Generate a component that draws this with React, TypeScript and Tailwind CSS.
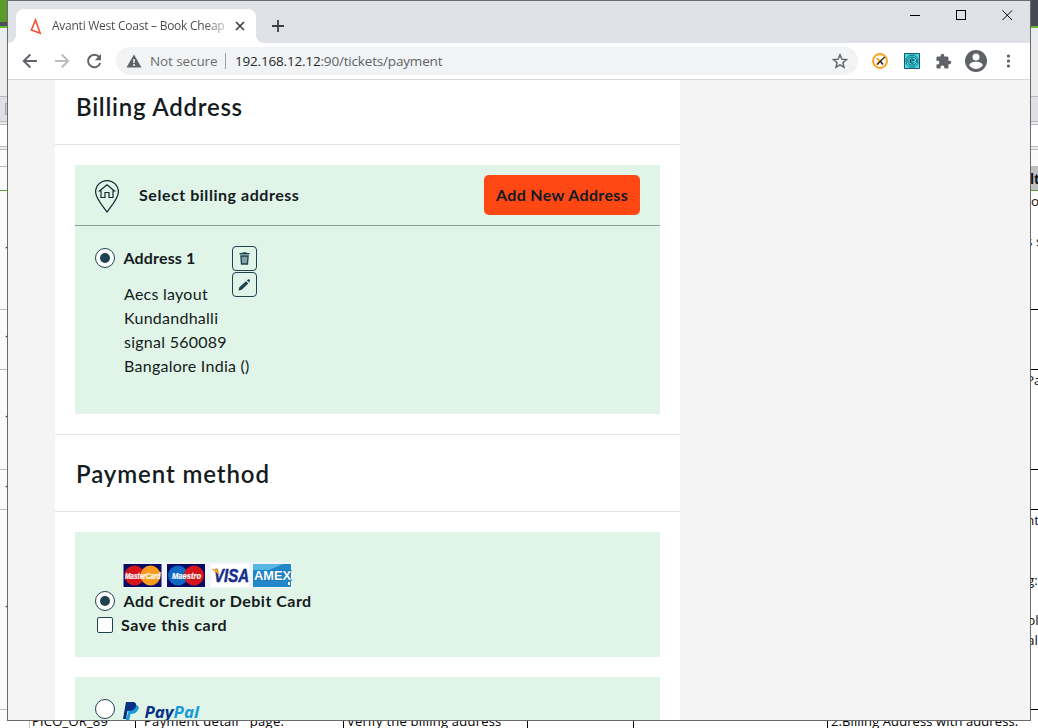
import React from "react";

type Seg = { h: number; cls: string; text?: string; textCls?: string; box?: boolean };

const leftSegments: Seg[] = [
  { h: 22, cls: "bg-[#5a9a2b]" },
  { h: 4, cls: "bg-[#4b4d5a]" },
  { h: 2, cls: "bg-[#68b82e]" },
  { h: 69, cls: "bg-[#ebecee] border-b border-[#b9bac0]" },
  { h: 25, cls: "bg-[#dfe0e6] border-b border-[#b4b5ba] pl-[5px] pt-[6px]", box: true },
  { h: 3, cls: "bg-[#ebecee] border-b border-[#b9bac0]" },
  { h: 22, cls: "bg-white border-b border-[#b9bac0]" },
  { h: 3, cls: "bg-[#ebecee] border-b border-[#b9bac0]" },
  { h: 17, cls: "bg-[#fafafa] border-b border-[#c0c0c0]" },
  { h: 24, cls: "bg-[#fafafa] border-b border-[#57a02c]" },
  { h: 119, cls: "bg-[#fafafa] border-b border-[#c0c0c0]", text: "1", textCls: "pl-[4px] pt-[50px]" },
  { h: 60, cls: "bg-[#fafafa] border-b border-[#c0c0c0]", text: "1", textCls: "pl-[4px] pt-[20px]" },
  { h: 100, cls: "bg-[#fafafa] border-b border-[#c0c0c0]", text: "1", textCls: "pl-[4px] pt-[40px]" },
  { h: 40, cls: "bg-[#fafafa] border-b border-[#c0c0c0]", text: "1", textCls: "pl-[4px] pt-[10px]" },
  { h: 200, cls: "bg-[#fafafa] border-b border-[#c0c0c0]", text: "1", textCls: "pl-[4px] pt-[90px]" },
  { h: 11, cls: "bg-[#fafafa]" },
];

const rightSegments: Seg[] = [
  { h: 26, cls: "bg-[#444954]" },
  { h: 2, cls: "bg-[#68b82e]" },
  { h: 69, cls: "bg-[#ebecee] border-b border-[#b9bac0]" },
  { h: 25, cls: "bg-[#dfe0e6] border-b border-[#b4b5ba]" },
  { h: 3, cls: "bg-[#ebecee] border-b border-[#b9bac0]" },
  { h: 22, cls: "bg-white border-b border-[#b9bac0]" },
  { h: 3, cls: "bg-[#ebecee] border-b border-[#b9bac0]" },
  { h: 16, cls: "bg-[#fafafa]" },
  { h: 25, cls: "bg-[#c0c0c0] border-b border-[#57a02c]", text: "lt", textCls: "-ml-[1px] pt-[4px] font-bold" },
  { h: 40, cls: "bg-white", text: "o", textCls: "pt-[1px]" },
  { h: 79, cls: "bg-white border-b border-black", text: "s s", textCls: "-ml-[5px] pt-[1px]" },
  { h: 60, cls: "bg-white border-b border-black" },
  { h: 100, cls: "bg-white border-b border-black", text: "Pa", textCls: "-ml-[5px] pt-[1px]" },
  { h: 40, cls: "bg-white border-b border-black" },
  { h: 61, cls: "bg-white", text: "nt", textCls: "-ml-[5px] pt-[1px]" },
  { h: 40, cls: "bg-white", text: "g:", textCls: "-ml-[4px]" },
  { h: 20, cls: "bg-white", text: "pl", textCls: "-ml-[4px]" },
  { h: 79, cls: "bg-white border-b border-black", text: "ale", textCls: "-ml-[4px]" },
  { h: 11, cls: "bg-white" },
];

function Strip({ segments }: { segments: Seg[] }) {
  return (
    <div className="flex w-[7px] shrink-0 flex-col overflow-hidden">
      {segments.map((s, i) => (
        <div key={i} className={`shrink-0 overflow-hidden ${s.cls}`} style={{ height: s.h }}>
          {s.box && <div className="h-[12px] w-[10px] border border-[#a9aab0] bg-[#c9cad0]" />}
          {s.text && (
            <div className={`whitespace-nowrap text-[13.5px] leading-[18px] text-[#111] ${s.textCls}`}>{s.text}</div>
          )}
        </div>
      ))}
    </div>
  );
}

function SheetRow() {
  const cells = [
    { w: 30, t: "", tc: "", b: "border-[#c0c0c0]" },
    { w: 106, t: "PICO_OR_89", tc: "tracking-[0.2px]", b: "border-black" },
    { w: 208, t: "Payment detail   page.", tc: "pl-[8px] tracking-[0.3px]", b: "border-black" },
    { w: 184, t: "Verify the billing address", tc: "pl-[3px] tracking-[0.22px]", b: "border-black" },
    { w: 106, t: "", tc: "", b: "border-black" },
    { w: 194, t: "", tc: "", b: "border-black" },
    { w: 210, t: "2.Billing Address with address.", tc: "pl-[3px] tracking-[0.1px]", b: "border-transparent" },
  ];
  return (
    <div className="flex h-[7px] shrink-0 bg-white">
      {cells.map((c, i) => (
        <div key={i} className={`h-[7px] shrink-0 overflow-hidden border-r ${c.b}`} style={{ width: c.w }}>
          <div className={`-mt-[9px] whitespace-pre pl-[2px] text-[13px] leading-[18px] text-black ${c.tc}`}>{c.t}</div>
        </div>
      ))}
    </div>
  );
}

function TabBar() {
  return (
    <div className="flex h-[42px] shrink-0 items-end bg-[#dee1e6]">
      <div className="h-2 w-2 bg-white">
        <div className="h-2 w-2 rounded-br-lg bg-[#dee1e6]" />
      </div>
      <div className="flex h-[34px] w-[240px] items-center rounded-t-lg bg-white">
        <svg className="ml-[14px] shrink-0" width="12" height="17" viewBox="0 0 12 17">
          <path d="M5.500 2 1.400 12l8.800 3.200L5.500 2Z" fill="none" stroke="#f5522d" strokeWidth="1.600" />
        </svg>
        <div className="ml-[10px] w-[173px] overflow-hidden whitespace-nowrap bg-gradient-to-r from-[#45484c] from-[88%] to-[#c5c6c8] bg-clip-text text-[12px] tracking-[-0.25px] text-transparent">
          Avanti West Coast – Book Cheap
        </div>
        <svg className="ml-[10px] shrink-0" width="10" height="10" viewBox="0 0 10 10">
          <path d="m1 1 8 8M9 1 1 9" stroke="#3c4043" strokeWidth="1.700" />
        </svg>
      </div>
      <div className="h-2 w-2 bg-white">
        <div className="h-2 w-2 rounded-bl-lg bg-[#dee1e6]" />
      </div>
      <svg className="mb-[11px] ml-2" width="12" height="12" viewBox="0 0 12 12">
        <path d="M6 0v12M0 6h12" stroke="#3c4043" strokeWidth="1.8" />
      </svg>
      <svg className="mb-[22px] ml-auto mr-[16px]" width="104" height="12" viewBox="0 0 104 12" shapeRendering="crispEdges">
        <path d="M0 6.500h10" stroke="#000" />
        <path d="M46.500 1.500h9v9h-9z" fill="none" stroke="#000" />
        <path d="m92.500 1.500 9.500 9.500M102 1.500 92.500 11" stroke="#000" shapeRendering="auto" />
      </svg>
    </div>
  );
}

function Toolbar() {
  return (
    <div className="flex h-[37px] shrink-0 items-center border-b border-[#d8d9dc] bg-white">
      <svg className="ml-[14px]" width="16" height="16" viewBox="0 0 16 16">
        <path d="M15 8H2M8.300 1.500 1.800 8l6.500 6.500" fill="none" stroke="#5f6368" strokeWidth="2" />
      </svg>
      <svg className="ml-4" width="16" height="16" viewBox="0 0 16 16">
        <path d="M1 8h13M7.700 1.500 14.200 8l-6.500 6.500" fill="none" stroke="#babcbe" strokeWidth="2" />
      </svg>
      <svg className="ml-4" width="16" height="16" viewBox="0 0 16 16">
        <path d="M13.200 4.200A6.200 6.200 0 1 0 14.200 10" fill="none" stroke="#5f6368" strokeWidth="2" />
        <path d="M15 1v6.200H8.800z" fill="#5f6368" />
      </svg>
      <div className="ml-[14px] flex h-7 w-[742px] items-center rounded-full bg-[#f1f3f4]">
        <svg className="ml-[10px]" width="16" height="14" viewBox="0 0 16 14">
          <path d="M8 .5 15.500 13.500H.5z" fill="#5f6368" />
          <path d="M8 5v4M8 10v2" stroke="#f1f3f4" strokeWidth="1.600" />
        </svg>
        <span className="ml-2 w-[67px] whitespace-nowrap text-[13.500px] tracking-[-0.1px] text-[#6b6f73]">Not secure</span>
        <div className="ml-2 h-4 w-px bg-[#9aa0a6]" />
        <span className="ml-[9px] whitespace-nowrap text-[13.500px] tracking-[-0.18px] text-[#27292c]">
          192.168.12.12<span className="text-[#5f6368]">:90/tickets/payment</span>
        </span>
        <svg className="ml-auto mr-[10px]" width="16" height="16" viewBox="0 0 16 16">
          <path d="m8 1.800 1.800 4.400 4.700.4-3.600 3.100 1.100 4.600L8 11.900l-4 2.400 1.100-4.600L1.500 6.600l4.700-.4z" fill="none" stroke="#5f6368" strokeWidth="1.400" />
        </svg>
      </div>
      <svg className="ml-[14px]" width="16" height="16" viewBox="0 0 16 16">
        <circle cx="8" cy="8" r="7" fill="#fff" stroke="#f9a31b" strokeWidth="1.900" />
        <path d="m3.300 4.500 3.200 1 1.500 1.500 3-1.500-2 3-3 3.500-2-.3 2.500-3.500z" fill="#f59c12" />
        <path d="M12.800 4 5 11.500" stroke="#222" strokeWidth="1.100" />
        <path d="m8.500 8.500 2.500 3" stroke="#222" strokeWidth="1.600" />
      </svg>
      <svg className="ml-4" width="16" height="16" viewBox="0 0 16 16">
        <path d="M.5.5h15v15H.5z" fill="#43dbe6" stroke="#1c5964" />
        <path d="m5.500 2.300 5-.1 3.400 3.300v5l-3.400 3.400h-5l-3.400-3.400v-5zM5.600 4.200h4.800l2 2.500v3L10 12H6l-2-2.500V6.500z" fill="none" stroke="#176473" strokeWidth="1" />
        <path d="M6 8.500 10 7.200c-.6-2-4-1.500-4 .8s2.600 2.500 4 1.300" fill="none" stroke="#174c5a" strokeWidth="1.100" />
      </svg>
      <svg className="ml-[15px]" width="17" height="17" viewBox="0 0 24 24">
        <path d="M20.500 11H19V7c0-1.100-.9-2-2-2h-4V3.500a2.500 2.500 0 0 0-5 0V5H4c-1.100 0-2 .9-2 2v3.800h1.500a2.700 2.700 0 0 1 0 5.400H2V20c0 1.100.9 2 2 2h3.800v-1.500a2.700 2.700 0 0 1 5.400 0V22H17c1.100 0 2-.9 2-2v-4h1.500a2.500 2.500 0 0 0 0-5z" fill="#5f6368" />
      </svg>
      <svg className="ml-[13px]" width="22" height="22" viewBox="0 0 22 22">
        <circle cx="11" cy="11" r="11" fill="#5f6368" />
        <circle cx="11" cy="7" r="3.500" fill="#fff" />
        <path d="M4.300 15.500c0-5 13.400-5 13.400 0-3.300 4.500-10 4.500-13.400 0z" fill="#fff" />
      </svg>
      <svg className="ml-[20px]" width="4" height="14" viewBox="0 0 4 14">
        <circle cx="1.500" cy="2" r="1.600" fill="#5f6368" />
        <circle cx="1.500" cy="7" r="1.600" fill="#5f6368" />
        <circle cx="1.500" cy="12" r="1.600" fill="#5f6368" />
      </svg>
    </div>
  );
}

function Radio({ checked }: { checked?: boolean }) {
  return (
    <span className="flex size-5 shrink-0 items-center justify-center rounded-full border border-[#1f4251] bg-white">
      {checked && <span className="size-[10px] rounded-full bg-[#1f4251]" />}
    </span>
  );
}

function CardLogos() {
  return (
    <svg className="ml-12 block" width="170" height="26" viewBox="0 0 170 26" fontFamily="'Liberation Sans', sans-serif" fontWeight="700" fontStyle="italic">
      <path d="M0 0h170v26H0z" fill="#f0f4fb" />
      <path d="M.5 2h38v23H.5zM44 2h38v23H44z" fill="#0b0b64" />
      <circle cx="11.500" cy="13.500" r="10" fill="#d5141c" />
      <circle cx="27.500" cy="13.500" r="10" fill="#fb9c1b" />
      <text x="2" y="16.500" fontSize="8.500" fill="#fff" stroke="#fff" strokeWidth=".2" textLength="35.500" lengthAdjust="spacingAndGlyphs">MasterCard</text>
      <circle cx="55" cy="13.500" r="10" fill="#1167c4" />
      <circle cx="71" cy="13.500" r="10" fill="#d5141c" />
      <text x="49" y="16.500" fontSize="8.500" fill="#fff" stroke="#fff" strokeWidth=".2" textLength="29" lengthAdjust="spacingAndGlyphs">Maestro</text>
      <path d="M88 2h38v23H88z" fill="#fff" />
      <text x="91" y="20" fontSize="18" fill="#162d8c" stroke="#162d8c" strokeWidth=".5" textLength="35" lengthAdjust="spacingAndGlyphs">VISA</text>
      <path d="M88.500 7h6l2 6z" fill="#f5a51c" />
      <path d="M130 2h38v23h-38z" fill="#2388c9" />
      <path d="M130 2h30l-14 6h-16z" fill="#58b6e2" />
      <text x="131" y="18" fontSize="13.500" fill="#fff" stroke="#1b79b9" strokeWidth="1.400" paintOrder="stroke" fontStyle="normal" textLength="37" lengthAdjust="spacingAndGlyphs">AMEX</text>
      <path d="M165 20h2v3h-2z" fill="#fff" />
    </svg>
  );
}

function IconButton({ children }: { children: React.ReactNode }) {
  return (
    <button className="flex size-[25px] items-center justify-center rounded-[4px] border border-[#1f4251]">{children}</button>
  );
}

function Page() {
  return (
    <main className="flex min-h-0 flex-1 overflow-hidden bg-[#f4f4f4] font-['Lato',sans-serif] text-[#141b21]">
      <div className="ml-[47px] w-[625px] shrink-0 bg-white">
        <h2 className="flex h-[65px] items-center border-b border-[#e5e5e5] pb-[11px] pl-[21px] text-[24px] font-semibold tracking-[0.75px]">Billing Address</h2>
        <section className="border-b border-[#e5e5e5] p-5">
          <div className="h-[249px] bg-[#e0f4e7]">
            <div className="flex h-[61px] items-center border-b border-[#859f98] pl-5 pr-5">
              <svg className="mt-[3px]" width="24" height="33" viewBox="0 0 24 33" fill="none" stroke="#142733" strokeWidth="1.200">
                <path d="M12 32C8.500 27 .6 18.500.6 12a11.400 11.400 0 0 1 22.800 0C23.400 18.500 15.500 27 12 32z" />
                <path d="m4.500 11 7.500-6.300L19.500 11H18v6.500h-4v-5h-4v5H6V11z" />
              </svg>
              <span className="ml-5 whitespace-nowrap text-[16px] font-bold tracking-[0.54px]">Select billing address</span>
              <button className="ml-auto h-10 w-[156px] whitespace-nowrap rounded-[5px] bg-[#ff4713] text-[16px] font-bold tracking-[0.36px]">Add New Address</button>
            </div>
            <div className="flex pl-5 pt-5">
              <div className="w-[137px]">
                <div className="flex h-6 items-center">
                  <Radio checked />
                  <span className="ml-[8.5px] whitespace-nowrap text-[16px] font-bold tracking-[0.15px]">Address 1</span>
                </div>
                <p className="ml-[29px] mt-3 whitespace-nowrap text-[16px] leading-6 tracking-[0.26px]">
                  Aecs layout<br />Kundandhalli<br />signal 560089<br />Bangalore India ()
                </p>
              </div>
              <div className="flex flex-col gap-px">
                <IconButton>
                  <svg width="11" height="13" viewBox="0 0 11 13">
                    <path d="M.5 1h3V.3h4V1h3v1.500H.5z" fill="#1f4251" />
                    <path d="M1.900 4h7.200l-.6 8h-6z" fill="#83a3a0" stroke="#1f4251" strokeWidth="1.300" />
                  </svg>
                </IconButton>
                <IconButton>
                  <svg width="13" height="13" viewBox="0 0 13 13">
                    <path d="m.5 12.500.8-3.300 6.800-6 2.200 2.300-6.600 6.200zM8.900 2.400 10.300 1.200q1.400-.3 1.800 1.200l-1 2.200z" fill="#1f4251" />
                  </svg>
                </IconButton>
              </div>
            </div>
          </div>
        </section>
        <h2 className="flex h-[77px] items-center border-b border-[#e5e5e5] pl-[21px] pt-[2px] text-[24px] font-semibold tracking-[0.9px]">Payment method</h2>
        <section className="flex flex-col gap-5 p-5">
          <div className="h-[125px] bg-[#e0f4e7] pt-[30px]">
            <CardLogos />
            <div className="-mt-px ml-5 flex h-7 items-center">
              <Radio checked />
              <span className="ml-[8.5px] whitespace-nowrap text-[16px] font-bold tracking-[0.48px]">Add Credit or Debit Card</span>
            </div>
            <div className="-mt-[2px] ml-[22px] flex h-6 items-center">
              <span className="size-4 shrink-0 rounded-[2px] border border-[#1f4251] bg-white" />
              <span className="ml-2 whitespace-nowrap text-[16px] font-bold tracking-[0.6px]">Save this card</span>
            </div>
          </div>
          <div className="flex h-[43px] overflow-hidden bg-[#e0f4e7] pl-5 pt-[22px]">
            <Radio />
            <svg className="ml-[8px] mt-[2px]" width="78" height="24" viewBox="0 0 78 24">
              <path d="M6 3h5c6 0 3 9-4 9H6l-1.500 7H1z" fill="#1b9cd8" transform="translate(1.500 1)" />
              <path d="M3 1h7.500c4.500 0 3.500 9-4 9H4.500L3 18H0z" fill="#063187" />
              <text x="21.500" y="17" fontFamily="'Noto Sans', sans-serif" fontSize="16" fontWeight="700" fontStyle="italic" textLength="54.500" lengthAdjust="spacingAndGlyphs" fill="#063187">
                Pay<tspan fill="#169bd7">Pal</tspan>
              </text>
            </svg>
          </div>
        </section>
      </div>
    </main>
  );
}

export default function App() {
  return (
    <div className="flex h-[728px] w-[1038px] flex-col overflow-hidden bg-white font-['Open_Sans','Noto_Sans',sans-serif]">
      <div className="flex h-[721px] shrink-0">
        <Strip segments={leftSegments} />
        <div className="flex w-[1024px] shrink-0 flex-col overflow-hidden border border-[#6a6a6a]">
          <TabBar />
          <Toolbar />
          <Page />
        </div>
        <Strip segments={rightSegments} />
      </div>
      <SheetRow />
    </div>
  );
}
